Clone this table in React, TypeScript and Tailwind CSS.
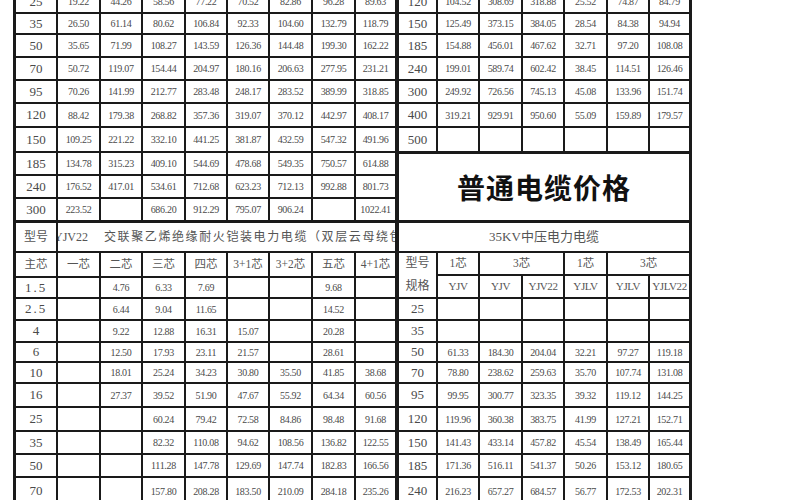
import React from "react";

const SERIF = "font-['Liberation_Serif','Noto_Sans_CJK_SC',serif]";

const leftTop: string[][] = [
  ["25", "19.22", "44.26", "58.56", "77.22", "70.52", "82.86", "96.28", "89.63"],
  ["35", "26.50", "61.14", "80.62", "106.84", "92.33", "104.60", "132.79", "118.79"],
  ["50", "35.65", "71.99", "108.27", "143.59", "126.36", "144.48", "199.30", "162.22"],
  ["70", "50.72", "119.07", "154.44", "204.97", "180.16", "206.63", "277.95", "231.21"],
  ["95", "70.26", "141.99", "212.77", "283.48", "248.17", "283.52", "389.99", "318.85"],
  ["120", "88.42", "179.38", "268.82", "357.36", "319.07", "370.12", "442.97", "408.17"],
  ["150", "109.25", "221.22", "332.10", "441.25", "381.87", "432.59", "547.32", "491.96"],
  ["185", "134.78", "315.23", "409.10", "544.69", "478.68", "549.35", "750.57", "614.88"],
  ["240", "176.52", "417.01", "534.61", "712.68", "623.23", "712.13", "992.88", "801.73"],
  ["300", "223.52", "", "686.20", "912.29", "795.07", "906.24", "", "1022.41"],
];

const leftHeader = ["主芯", "一芯", "二芯", "三芯", "四芯", "3+1芯", "3+2芯", "五芯", "4+1芯"];

const leftBottom: string[][] = [
  ["1.5", "", "4.76", "6.33", "7.69", "", "", "9.68", ""],
  ["2.5", "", "6.44", "9.04", "11.65", "", "", "14.52", ""],
  ["4", "", "9.22", "12.88", "16.31", "15.07", "", "20.28", ""],
  ["6", "", "12.50", "17.93", "23.11", "21.57", "", "28.61", ""],
  ["10", "", "18.01", "25.24", "34.23", "30.80", "35.50", "41.85", "38.68"],
  ["16", "", "27.37", "39.52", "51.90", "47.67", "55.92", "64.34", "60.56"],
  ["25", "", "", "60.24", "79.42", "72.58", "84.86", "98.48", "91.68"],
  ["35", "", "", "82.32", "110.08", "94.62", "108.56", "136.82", "122.55"],
  ["50", "", "", "111.28", "147.78", "129.69", "147.74", "182.83", "166.56"],
  ["70", "", "", "157.80", "208.28", "183.50", "210.09", "284.18", "235.26"],
];

const rightTop: string[][] = [
  ["120", "104.52", "308.69", "318.88", "25.52", "74.87", "84.79"],
  ["150", "125.49", "373.15", "384.05", "28.54", "84.38", "94.94"],
  ["185", "154.88", "456.01", "467.62", "32.71", "97.20", "108.08"],
  ["240", "199.01", "589.74", "602.42", "38.45", "114.51", "126.46"],
  ["300", "249.92", "726.56", "745.13", "45.08", "133.96", "151.74"],
  ["400", "319.21", "929.91", "950.60", "55.09", "159.89", "179.57"],
  ["500", "", "", "", "", "", ""],
];

const rightBottom: string[][] = [
  ["25", "", "", "", "", "", ""],
  ["35", "", "", "", "", "", ""],
  ["50", "61.33", "184.30", "204.04", "32.21", "97.27", "119.18"],
  ["70", "78.80", "238.62", "259.63", "35.70", "107.74", "131.08"],
  ["95", "99.95", "300.77", "323.35", "39.32", "119.12", "144.25"],
  ["120", "119.96", "360.38", "383.75", "41.99", "127.21", "152.71"],
  ["150", "141.43", "433.14", "457.82", "45.54", "138.49", "165.44"],
  ["185", "171.36", "516.11", "541.37", "50.26", "153.12", "180.65"],
  ["240", "216.23", "657.27", "684.57", "56.77", "172.53", "202.31"],
];

function Cell({ children, className = "" }: { children?: React.ReactNode; className?: string }) {
  return (
    <div
      className={`bg-white flex items-center justify-center overflow-hidden whitespace-nowrap ${SERIF} ${className}`}
    >
      {children}
    </div>
  );
}

function DataRow({ row, thick = false }: { row: string[]; thick?: boolean }) {
  const b = thick ? "border-t border-[#1a1a1a]" : "";
  return (
    <>
      {row.map((v, i) =>
        i === 0 ? (
          <Cell key={i} className={`text-[13px] text-[#4a4a4a] ${v.includes(".") && v.length === 3 ? "tracking-[2px]" : ""} ${b}`}>
            {v}
          </Cell>
        ) : (
          <Cell key={i} className={`text-[10px] tracking-[-0.3px] text-[#4a4a4a] ${b}`}>
            {v}
          </Cell>
        )
      )}
    </>
  );
}

export default function App() {
  return (
    <div className="w-[800px] h-[500px] overflow-hidden bg-white">
      <div className="ml-[13px] -mt-[9px] flex w-fit items-start bg-[#1a1a1a] pl-[3px] pr-[3px] gap-[4px]">
        {/* Left table */}
        <div className="grid grid-cols-[40px_41px_40px_41px_40px_40px_41px_41px_39px] grid-rows-[21px_19px_21px_21px_21px_22px_23px_21px_21px_21px_29px_23px_19px_20px_20px_18px_19px_22px_22px_21px_21px_26px] gap-[2px] bg-[#1a1a1a]">
          {leftTop.map((r, i) => (
            <DataRow key={`lt${i}`} row={r} />
          ))}
          <Cell className="text-[12px] text-[#555] border-t border-[#1a1a1a]">型号</Cell>
          <Cell className="col-span-8 justify-start text-[#555] border-t border-[#1a1a1a]">
            <span className="-ml-[4px] text-[12px]">YJV22</span>
            <span className="ml-[16px] text-[12px] tracking-[1.6px]">
              交联聚乙烯绝缘耐火铠装电力电缆（双层云母绕包）
            </span>
          </Cell>
          {leftHeader.map((h, i) => (
            <Cell key={`lh${i}`} className="text-[11.5px] text-[#555]">
              {h}
            </Cell>
          ))}
          {leftBottom.map((r, i) => (
            <DataRow key={`lb${i}`} row={r} />
          ))}
        </div>

        {/* Right table */}
        <div className="grid grid-cols-[37px_40px_41px_40px_41px_40px_39px] grid-rows-[21px_19px_21px_21px_21px_22px_23px_67px_29px_21px_21px_20px_20px_18px_19px_22px_22px_21px_21px_26px] gap-[2px] bg-[#1a1a1a]">
          {rightTop.map((r, i) => (
            <DataRow key={`rt${i}`} row={r} />
          ))}
          <div className="col-span-7 bg-white border-t border-[#1a1a1a] flex items-center justify-center">
            <span className="font-['Noto_Sans_CJK_SC',sans-serif] font-bold text-[28px] text-[#111] tracking-[1px]">
              普通电缆价格
            </span>
          </div>
          <Cell className="col-span-7 text-[13px] text-[#555] border-t border-[#1a1a1a]">35KV中压电力电缆</Cell>
          <Cell className="row-span-2 flex-col text-[12px] leading-[23px] text-[#555]">
            <span>型号</span>
            <span>规格</span>
          </Cell>
          <Cell className="text-[11.5px] text-[#555]">1芯</Cell>
          <Cell className="col-span-2 text-[11.5px] text-[#555]">3芯</Cell>
          <Cell className="text-[11.5px] text-[#555]">1芯</Cell>
          <Cell className="col-span-2 text-[11.5px] text-[#555]">3芯</Cell>
          {["YJV", "YJV", "YJV22", "YJLV", "YJLV", "YJLV22"].map((t, i) => (
            <Cell key={`rh${i}`} className="text-[11px] tracking-[-0.4px] text-[#555]">
              {t}
            </Cell>
          ))}
          {rightBottom.map((r, i) => (
            <DataRow key={`rb${i}`} row={r} />
          ))}
        </div>
      </div>
    </div>
  );
}
